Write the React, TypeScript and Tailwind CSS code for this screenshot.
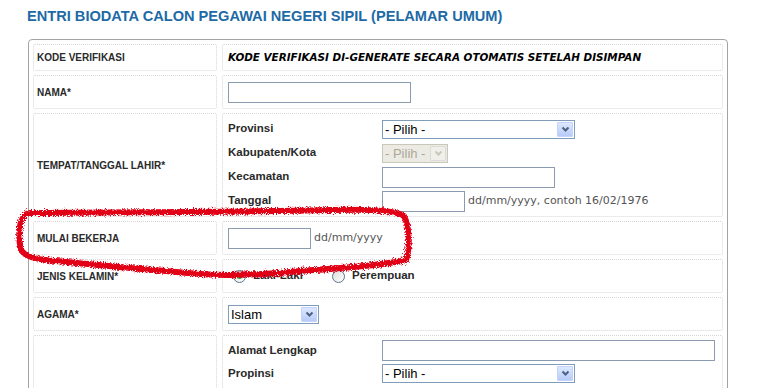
import React from "react";

const labelFont = "font-['Liberation_Sans',Arial,sans-serif]";
const hintFont = "font-['DejaVu_Sans',Verdana,sans-serif]";

const TextBox = ({ width }: { width: string }) => (
  <div className={`${width} h-[21px] border border-[#8a9bb0] bg-white`} />
);

const Select = ({ width, value, disabled = false }: { width: string; value: string; disabled?: boolean }) => (
  <div
    className={`${width} h-[19px] flex items-center justify-between border ${
      disabled ? "border-[#c9c7ba] bg-[#ebebe4] text-[#aca899]" : "border-[#7f9db9] bg-white text-black"
    } text-[13px] leading-none pl-[2px] pr-[1px]`}
  >
    <span>{value}</span>
    <span
      className={`w-[16px] h-[15px] flex items-center justify-center rounded-[1px] border ${
        disabled ? "border-[#dcdcd6] bg-[#f0f0ea]" : "border-[#c3d3fd] bg-gradient-to-b from-[#dde8fe] to-[#b7cbf7]"
      }`}
    >
      <svg width="9" height="7" viewBox="0 0 9 7">
        <polyline
          points="1.5,1.5 4.5,4.5 7.5,1.5"
          fill="none"
          stroke={disabled ? "#c9c7ba" : "#4d6185"}
          strokeWidth="2"
        />
      </svg>
    </span>
  </div>
);

const Radio = ({ checked }: { checked?: boolean }) => (
  <span className="w-[13px] h-[13px] rounded-full border border-[#5b7291] bg-gradient-to-br from-[#dcdcd6] to-white flex items-center justify-center">
    {checked && <span className="w-[5px] h-[5px] rounded-full bg-[#2aa02a]" />}
  </span>
);

const Row = ({ label, height, children }: { label: string; height: string; children?: React.ReactNode }) => (
  <div className={`flex gap-[5px] ${height}`}>
    <div className="w-[184px] border border-dotted border-[#d6d6d6] rounded-[2px] flex items-center pl-[3px] text-[10px] font-bold text-[#2a2a2a]">
      {label}
    </div>
    <div className="flex-1 border border-dotted border-[#d6d6d6] rounded-[2px] flex flex-col justify-center pl-[5px]">
      {children}
    </div>
  </div>
);

const SubRow = ({ label, h = "h-[24px]", children }: { label: string; h?: string; children?: React.ReactNode }) => (
  <div className={`grid grid-cols-[154px_1fr] ${h} items-center`}>
    <span className="text-[11.5px] font-bold text-[#2a2a2a]">{label}</span>
    <div className="flex items-center">{children}</div>
  </div>
);

const Hint = ({ text }: { text: string }) => (
  <span className={`${hintFont} text-[11px] text-[#555] ml-[3px]`}>{text}</span>
);

export default function App() {
  return (
    <div className={`relative w-[764px] h-[388px] overflow-hidden bg-white ${labelFont}`}>
      <h1 className="pl-[27px] pt-[7px] text-[14.6px] leading-[18px] font-bold text-[#1d6aa6]">
        ENTRI BIODATA CALON PEGAWAI NEGERI SIPIL (PELAMAR UMUM)
      </h1>

      <div className="ml-[28px] mt-[14px] w-[700px] border border-[#a3a3a3] rounded-[4px] p-[4px] flex flex-col gap-[4px]">
        <Row label="KODE VERIFIKASI" height="h-[27px]">
          <span className={`${hintFont} text-[10.4px] font-bold italic text-black`}>
            KODE VERIFIKASI DI-GENERATE SECARA OTOMATIS SETELAH DISIMPAN
          </span>
        </Row>

        <Row label="NAMA*" height="h-[34px]">
          <TextBox width="w-[183px]" />
        </Row>

        <Row label="TEMPAT/TANGGAL LAHIR*" height="h-[104px]">
          <SubRow label="Provinsi">
            <Select width="w-[193px]" value="- Pilih -" />
          </SubRow>
          <SubRow label="Kabupaten/Kota">
            <Select width="w-[66px]" value="- Pilih -" disabled />
          </SubRow>
          <SubRow label="Kecamatan">
            <TextBox width="w-[173px]" />
          </SubRow>
          <SubRow label="Tanggal">
            <TextBox width="w-[83px]" />
            <Hint text="dd/mm/yyyy, contoh 16/02/1976" />
          </SubRow>
        </Row>

        <Row label="MULAI BEKERJA" height="h-[34px]">
          <div className="flex items-center">
            <TextBox width="w-[83px]" />
            <Hint text="dd/mm/yyyy" />
          </div>
        </Row>

        <Row label="JENIS KELAMIN*" height="h-[34px]">
          <div className="flex items-center pl-[5px] text-[11.5px] font-bold text-[#2a2a2a]">
            <Radio checked />
            <span className="ml-[7px] w-[79px]">Laki-Laki</span>
            <Radio />
            <span className="ml-[7px]">Perempuan</span>
          </div>
        </Row>

        <Row label="AGAMA*" height="h-[34px]">
          <Select width="w-[91px]" value="Islam" />
        </Row>

        <Row label="" height="h-[120px]">
          <div className="flex flex-col justify-start h-full pt-[3px]">
            <SubRow label="Alamat Lengkap" h="h-[23px]">
              <TextBox width="w-[333px]" />
            </SubRow>
            <SubRow label="Propinsi" h="h-[23px]">
              <Select width="w-[193px]" value="- Pilih -" />
            </SubRow>
          </div>
        </Row>
      </div>

      {/* hand-drawn red marker around MULAI BEKERJA */}
      <svg className="absolute left-0 top-0 pointer-events-none" width="764" height="388" viewBox="0 0 764 388">
        <defs>
          <filter id="marker" x="-5%" y="-20%" width="110%" height="140%">
            <feTurbulence type="fractalNoise" baseFrequency="1.1" numOctaves="2" seed="5" />
            <feDisplacementMap in="SourceGraphic" scale="6" />
          </filter>
        </defs>
        <path
          d="M30,213 C120,212 250,212 330,210 C370,209 398,211 404,216 C410,228 410,248 406,260
             C380,266 330,269 300,271 C260,275 230,276 200,274 C150,270 100,265 55,261
             C35,259 24,257 21,249 C18,238 19,224 23,218 C25,214 28,213 30,213 Z"
          fill="none"
          stroke="#e10613"
          strokeWidth="6"
          strokeLinejoin="round"
          filter="url(#marker)"
        />
      </svg>
    </div>
  );
}
